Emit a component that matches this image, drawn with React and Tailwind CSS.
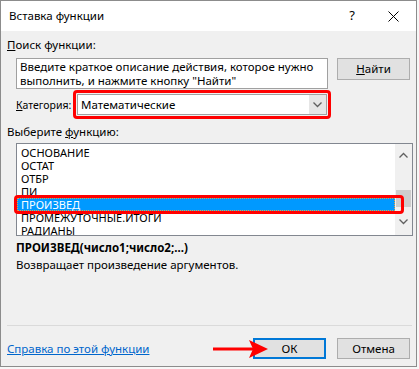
import React from 'react';

const functions = [
  'ОСНОВАНИЕ',
  'ОСТАТ',
  'ОТБР',
  'ПИ',
  'ПРОИЗВЕД',
  'ПРОМЕЖУТОЧНЫЕ.ИТОГИ',
  'РАДИАНЫ',
];

const Chevron = ({ up = false }) => (
  <svg width="9" height="6" viewBox="0 0 9 6" className="block">
    <path
      d={up ? 'M0.5 5.5 L4.5 1.5 L8.5 5.5' : 'M0.5 0.5 L4.5 4.5 L8.5 0.5'}
      fill="none"
      stroke="#606060"
      strokeWidth="1.3"
    />
  </svg>
);

function FunctionList() {
  return (
    <div className="relative ml-[9px] mt-[3px] flex h-[93px] w-[397px] border border-[#828790] bg-white">
      <div className="flex-1 overflow-hidden pt-[2px]">
        {functions.map((name) => (
          <div
            key={name}
            className={
              name === 'ПРОИЗВЕД'
                ? 'h-[13px] border border-dotted border-[#e8a040] bg-[#0099ff] pl-[3px] text-[11px] leading-[11px] text-white'
                : 'h-[13px] pl-[4px] text-[11px] leading-[13px] text-black'
            }
          >
            {name}
          </div>
        ))}
      </div>
      {/* scrollbar */}
      <div className="flex w-[17px] flex-col items-center bg-[#f0f0f0]">
        <div className="mt-[8px]">
          <Chevron up />
        </div>
        <div className="mt-[32px] h-[17px] w-[15px] bg-[#cdcdcd]" />
        <div className="mt-[12px]">
          <Chevron />
        </div>
      </div>
      {/* red highlight annotation */}
      <div className="absolute left-[-3px] top-[51px] h-[19px] w-[390px] rounded-[4px] border-[3px] border-[#ff0000]" />
    </div>
  );
}

export default function App() {
  return (
    <div className="h-[369px] w-[419px] bg-[#f7f7f7] font-['Noto_Sans',sans-serif] text-black">
      <div className="relative flex h-[367px] w-[417px] flex-col border border-[#8c8c8c] bg-[#f0f0f0]">
        {/* title bar */}
        <div className="flex h-[30px] items-center bg-white pl-[8px]">
          <span className="text-[11.5px]">Вставка функции</span>
          <span className="ml-auto text-[13px]">?</span>
          <svg width="11" height="11" viewBox="0 0 11 11" className="ml-[33px] mr-[17px]">
            <path d="M0.5 0.5 L10.5 10.5 M10.5 0.5 L0.5 10.5" stroke="#000" strokeWidth="1" />
          </svg>
        </div>

        <div className="flex flex-col pl-[6px] text-[11.5px]">
          <div className="mt-[6px] h-[16px] leading-[16px]">
            <span className="underline">П</span>оиск функции:
          </div>

          <div className="mt-[5px] flex items-start">
            <div className="ml-[9px] h-[31px] w-[312px] border border-[#a0a0a0] bg-white pl-[3px] pt-[1px] leading-[14px]">
              Введите краткое описание действия, которое нужно
              <br />
              выполнить, и нажмите кнопку "Найти"
            </div>
            <button className="ml-[9px] h-[22px] w-[73px] border border-[#adadad] bg-[#e1e1e1]">
              <span className="underline">Н</span>айти
            </button>
          </div>

          <div className="mt-[1px] flex items-center">
            <div className="ml-[9px] w-[57px] whitespace-nowrap text-[10.5px] leading-[16px]">
              <span className="underline">К</span>атегория:
            </div>
            <div className="rounded-[4px] border-[3px] border-[#ff0000] p-[1px]">
              <div className="flex h-[21px] w-[250px] items-center border border-[#a0a0a0] bg-white">
                <span className="flex-1 pl-[3px] leading-[16px]">Математические</span>
                <div className="flex h-[19px] w-[17px] items-center justify-center bg-[#e6e6e6]">
                  <Chevron />
                </div>
              </div>
            </div>
          </div>

          <div className="mt-[5px] h-[16px] leading-[16px]">
            Выберите <span className="underline">ф</span>ункцию:
          </div>

          <FunctionList />

          <div className="ml-[9px] mt-[4px] h-[16px] font-bold leading-[16px]">
            ПРОИЗВЕД(число1;число2;...)
          </div>
          <div className="ml-[9px] mt-[1px] h-[16px] leading-[16px]">
            Возвращает произведение аргументов.
          </div>

          <div className="mt-[52px] h-px w-[405px] bg-[#dadada]" />

          <div className="relative mt-[12px] flex h-[21px] items-center">
            <a className="text-[#0066cc] underline">Справка по этой функции</a>
            <button className="ml-auto h-[21px] w-[73px] border-2 border-[#0078d7] bg-[#e1e1e1]">
              ОК
            </button>
            <button className="ml-[11px] mr-[6px] h-[21px] w-[73px] border border-[#adadad] bg-[#e1e1e1]">
              Отмена
            </button>
            {/* red arrow annotation */}
            <svg
              width="56"
              height="22"
              viewBox="0 0 56 22"
              className="absolute left-[206px] top-[0px]"
            >
              <path d="M0 11 L40 11" stroke="#ff0000" strokeWidth="3" />
              <path d="M36 2 L55 11 L36 20 L40 11 Z" fill="#ff0000" />
            </svg>
          </div>
        </div>
      </div>
    </div>
  );
}
